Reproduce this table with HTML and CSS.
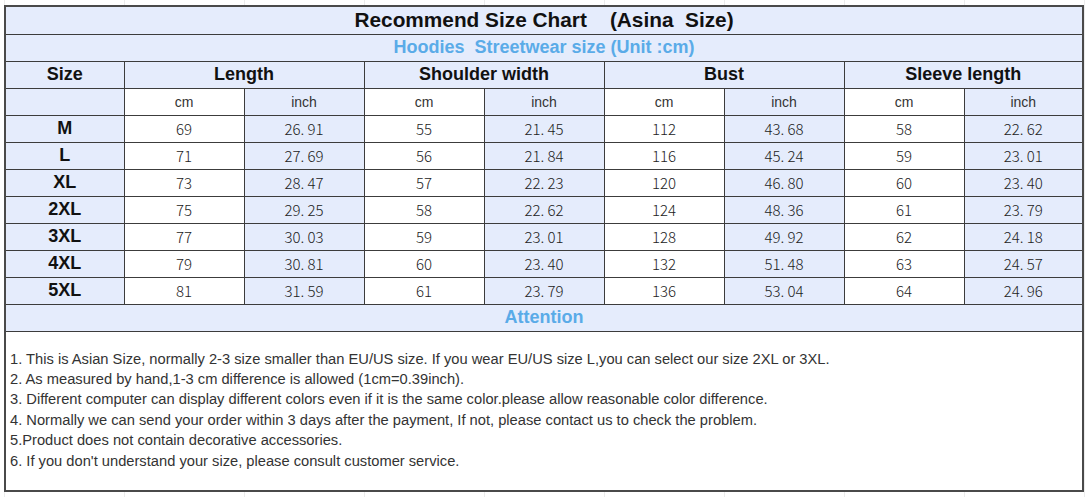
FILE: index.html
```html
<!DOCTYPE html>
<html>
<head>
<meta charset="utf-8">
<link rel="stylesheet" href="styles.css">
</head>
<body>
<table class="chart">
  <colgroup>
    <col class="c-first"><col class="c120"><col class="c120"><col class="c120"><col class="c120"><col class="c120"><col class="c120"><col class="c120"><col class="c-last">
  </colgroup>
  <tr class="r-title"><td colspan="9" class="title blue">Recommend Size Chart    (Asina  Size)</td></tr>
  <tr class="r27"><td colspan="9" class="sub blue">Hoodies  Streetwear size (Unit :cm)</td></tr>
  <tr class="r27 head">
    <td class="blue">Size</td>
    <td colspan="2" class="blue">Length</td>
    <td colspan="2" class="blue">Shoulder width</td>
    <td colspan="2" class="blue">Bust</td>
    <td colspan="2" class="blue">Sleeve length</td>
  </tr>
  <tr class="r27 unit">
    <td class="blue"></td>
    <td>cm</td><td class="blue">inch</td>
    <td>cm</td><td class="blue">inch</td>
    <td>cm</td><td class="blue">inch</td>
    <td>cm</td><td class="blue">inch</td>
  </tr>
  <tr class="r27 data"><td class="size blue">M</td><td>69</td><td class="blue">26. 91</td><td>55</td><td class="blue">21. 45</td><td>112</td><td class="blue">43. 68</td><td>58</td><td class="blue">22. 62</td></tr>
  <tr class="r27 data"><td class="size blue">L</td><td>71</td><td class="blue">27. 69</td><td>56</td><td class="blue">21. 84</td><td>116</td><td class="blue">45. 24</td><td>59</td><td class="blue">23. 01</td></tr>
  <tr class="r27 data"><td class="size blue">XL</td><td>73</td><td class="blue">28. 47</td><td>57</td><td class="blue">22. 23</td><td>120</td><td class="blue">46. 80</td><td>60</td><td class="blue">23. 40</td></tr>
  <tr class="r27 data"><td class="size blue">2XL</td><td>75</td><td class="blue">29. 25</td><td>58</td><td class="blue">22. 62</td><td>124</td><td class="blue">48. 36</td><td>61</td><td class="blue">23. 79</td></tr>
  <tr class="r27 data"><td class="size blue">3XL</td><td>77</td><td class="blue">30. 03</td><td>59</td><td class="blue">23. 01</td><td>128</td><td class="blue">49. 92</td><td>62</td><td class="blue">24. 18</td></tr>
  <tr class="r27 data"><td class="size blue">4XL</td><td>79</td><td class="blue">30. 81</td><td>60</td><td class="blue">23. 40</td><td>132</td><td class="blue">51. 48</td><td>63</td><td class="blue">24. 57</td></tr>
  <tr class="r27 data"><td class="size blue">5XL</td><td>81</td><td class="blue">31. 59</td><td>61</td><td class="blue">23. 79</td><td>136</td><td class="blue">53. 04</td><td>64</td><td class="blue">24. 96</td></tr>
  <tr class="r27"><td colspan="9" class="sub blue">Attention</td></tr>
  <tr class="r-notes">
    <td colspan="9" class="notes">
      <p>1. This is Asian Size, normally 2-3 size smaller than EU/US size. If you wear EU/US size L,you can select our size 2XL or 3XL.</p>
      <p>2. As measured by hand,1-3 cm difference is allowed (1cm=0.39inch).</p>
      <p>3. Different computer can display different colors even if it is the same color.please allow reasonable color difference.</p>
      <p>4. Normally we can send your order within 3 days after the payment, If not, please contact us to check the problem.</p>
      <p>5.Product does not contain decorative accessories.</p>
      <p>6. If you don't understand your size, please consult customer service.</p>
    </td>
  </tr>
</table>
</body>
</html>
```
FILE: styles.css
```css
html, body {
  margin: 0;
  padding: 0;
}
body {
  width: 1087px;
  height: 497px;
  overflow: hidden;
  box-sizing: border-box;
  padding: 5px 0 0 4px;
  background-color: #ffffff;
  background-image:
    repeating-linear-gradient(90deg, transparent 0 3px, #ececec 3px 4px, transparent 4px 120px);
  background-position: 1px 0;
  font-family: "Liberation Sans", Arial, sans-serif;
}
.chart {
  border-collapse: collapse;
  table-layout: fixed;
  width: 1078px;
  border: 2px solid #4a4a4a;
  background: #fff;
}
.c120 { width: 120px; }
.c-first { width: 119px; }
.c-last { width: 119px; }
.chart td {
  border: 1px solid #3c3c3c;
  padding: 0;
  text-align: center;
  vertical-align: middle;
  overflow: hidden;
  white-space: nowrap;
}
.blue { background: #e5ecfc; }
.r-title { height: 28px; }
.r27 { height: 27px; }
.title {
  font-weight: bold;
  font-size: 20.8px;
  color: #111;
  white-space: pre !important;
}
.sub {
  font-weight: bold;
  font-size: 18px;
  color: #5aabe8;
  white-space: pre !important;
}
.head td {
  font-weight: bold;
  font-size: 18px;
  color: #111;
}
.unit td {
  font-size: 14px;
  color: #333;
}
.data td {
  font-family: "Noto Sans CJK SC", "DejaVu Sans", sans-serif;
  font-size: 15px;
  font-weight: 300;
  color: #222;
}
.data td.size {
  font-family: "Liberation Sans", Arial, sans-serif;
  font-weight: bold;
  font-size: 18px;
  color: #111;
}
.r-notes { height: 160px; }
.chart td.notes {
  text-align: left;
  vertical-align: top;
  padding: 17px 0 0 4px;
  font-size: 14.7px;
  color: #333;
  white-space: normal;
}
.notes p {
  margin: 0;
  line-height: 20.4px;
}
```
